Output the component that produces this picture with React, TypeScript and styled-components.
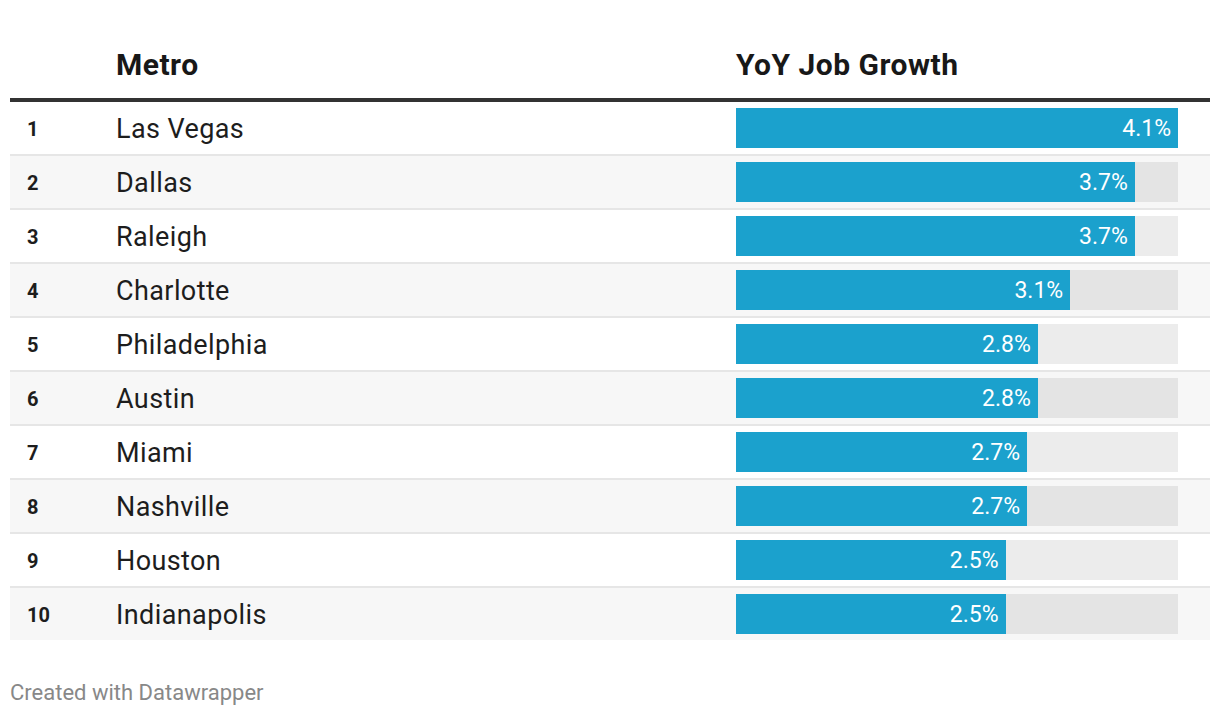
// react
import React from 'react'

// packages
import styled, { createGlobalStyle } from 'styled-components'

// constants
const MAX_VALUE = 4.1
const BAR_COLOR = '#1ba1cd'

const ROWS = [
  { rank: 1, metro: 'Las Vegas', value: 4.1 },
  { rank: 2, metro: 'Dallas', value: 3.7 },
  { rank: 3, metro: 'Raleigh', value: 3.7 },
  { rank: 4, metro: 'Charlotte', value: 3.1 },
  { rank: 5, metro: 'Philadelphia', value: 2.8 },
  { rank: 6, metro: 'Austin', value: 2.8 },
  { rank: 7, metro: 'Miami', value: 2.7 },
  { rank: 8, metro: 'Nashville', value: 2.7 },
  { rank: 9, metro: 'Houston', value: 2.5 },
  { rank: 10, metro: 'Indianapolis', value: 2.5 },
]

// styled
const GlobalStyle = createGlobalStyle`
  html, body {
    margin: 0;
    padding: 0;
    background: #fff;
  }
  body {
    font-family: Roboto, 'Liberation Sans', Arial, sans-serif;
    color: #1d1d1d;
    -webkit-font-smoothing: antialiased;
  }
`

const Wrapper = styled.div`
  padding: 0 10px;
`

const Table = styled.div`
  display: flex;
  flex-direction: column;
`

const Row = styled.div`
  display: grid;
  grid-template-columns: 106px 1fr 442px;
  padding-right: 32px;
  align-items: center;
`

const HeadRow = styled(Row)`
  align-items: end;
  padding-top: 48px;
  padding-bottom: 17px;
  border-bottom: 4px solid #333;
`

const HeadCell = styled.div`
  font-size: 30px;
  line-height: 33px;
  font-weight: 700;
  color: #181818;
  letter-spacing: 0.5px;
`

const BodyRow = styled(Row)<{ $striped: boolean }>`
  height: 52px;
  background: ${({ $striped }) => ($striped ? '#f7f7f7' : '#fff')};

  & + & {
    border-top: 2px solid #e6e6e6;
  }
`

const Rank = styled.div`
  padding-left: 17px;
  padding-top: 2px;
  font-size: 20px;
  font-weight: 700;
  color: #1d1d1d;
`

const Metro = styled.div`
  padding-top: 2px;
  font-size: 27px;
  letter-spacing: 0.4px;
  color: #1d1d1d;
`

const Track = styled.div`
  height: 40px;
  background: rgba(0, 0, 0, 0.075);
  display: flex;
`

const Bar = styled.div`
  height: 100%;
  background: ${BAR_COLOR};
  display: flex;
  align-items: center;
  justify-content: flex-end;
  padding-right: 7px;
  box-sizing: border-box;
  color: #fff;
  font-size: 23px;
`

const Footer = styled.div`
  margin-top: 40px;
  font-size: 22px;
  line-height: 26px;
  color: #888;
`

export default function App() {
  return (
    <Wrapper>
      <GlobalStyle />
      <Table>
        <HeadRow>
          <div />
          <HeadCell>Metro</HeadCell>
          <HeadCell>YoY Job Growth</HeadCell>
        </HeadRow>
        {ROWS.map((row, i) => (
          <BodyRow key={row.rank} $striped={i % 2 === 1}>
            <Rank>{row.rank}</Rank>
            <Metro>{row.metro}</Metro>
            <Track>
              <Bar style={{ width: `${(row.value / MAX_VALUE) * 100}%` }}>
                {row.value.toFixed(1)}%
              </Bar>
            </Track>
          </BodyRow>
        ))}
      </Table>
      <Footer>Created with Datawrapper</Footer>
    </Wrapper>
  )
}
